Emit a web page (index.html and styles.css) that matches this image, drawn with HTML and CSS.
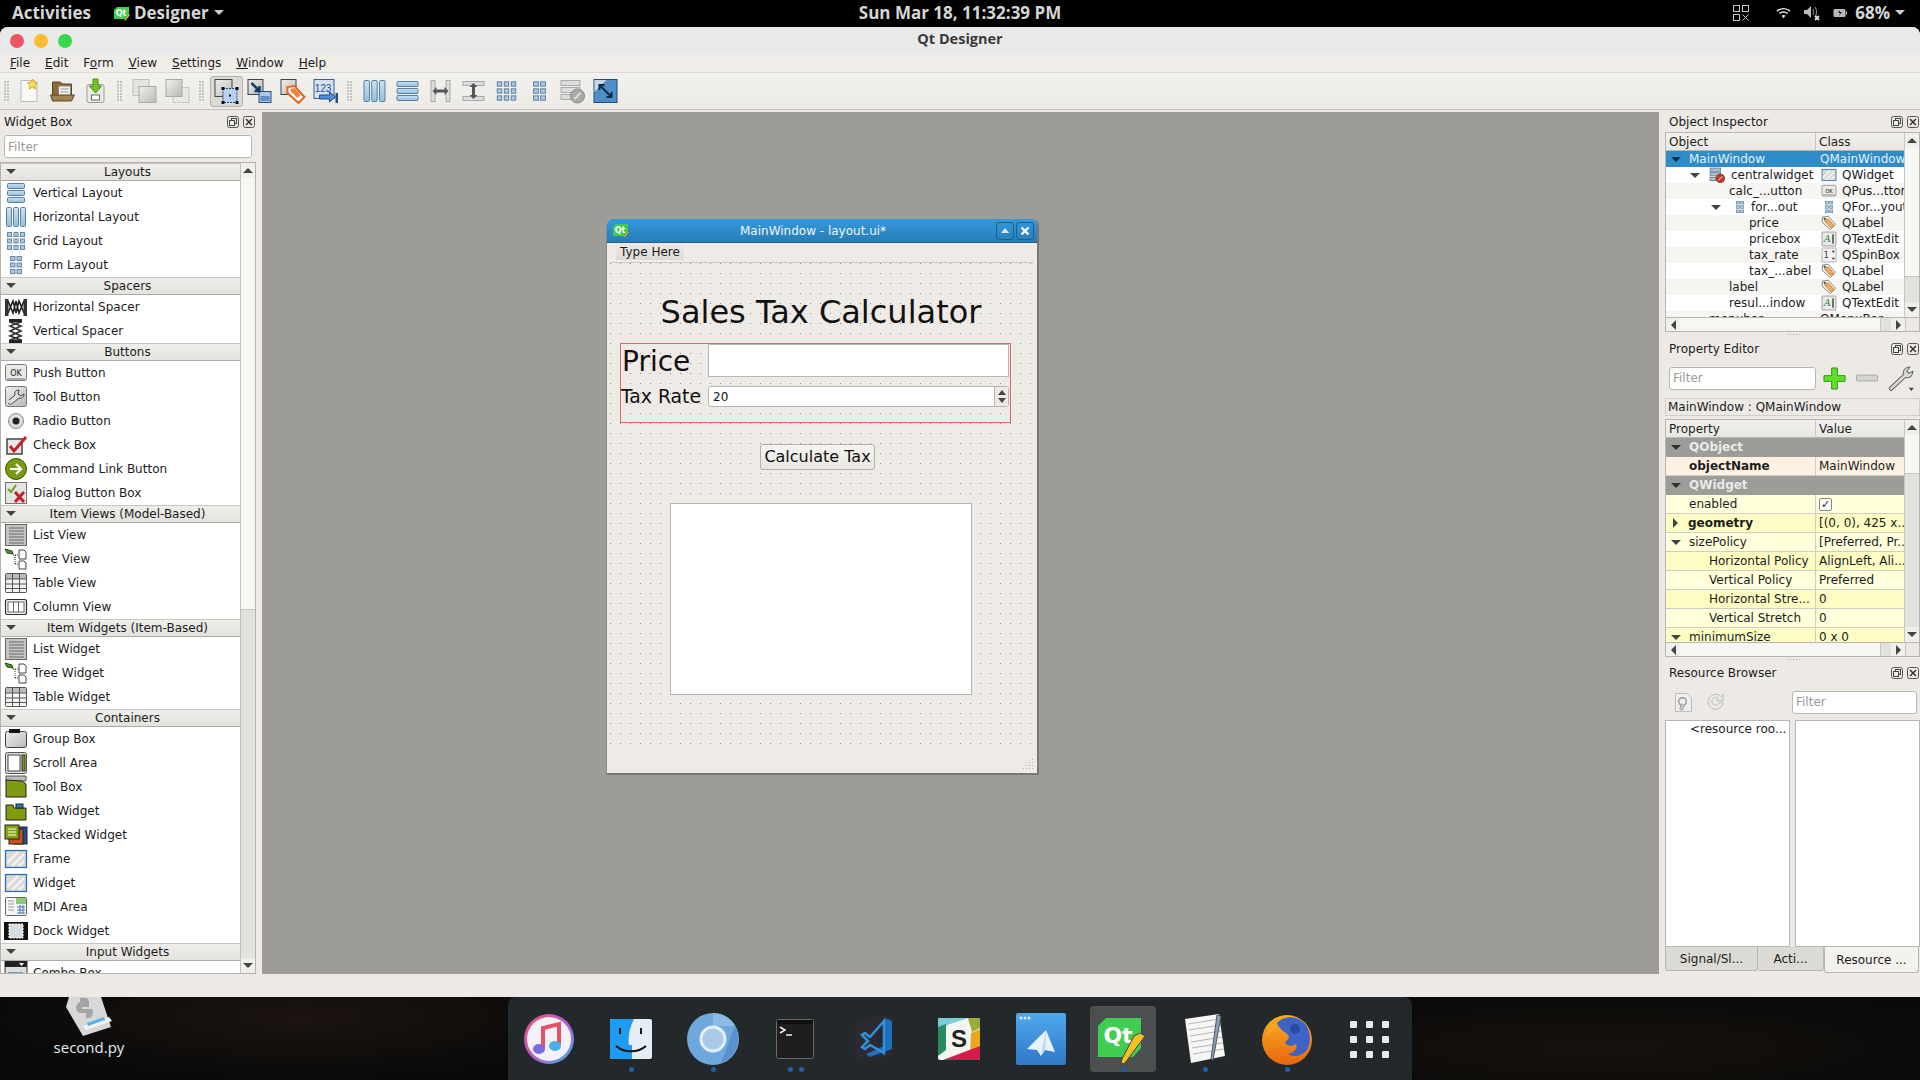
FILE: index.html
```html
<!DOCTYPE html>
<html lang="en">
<head>
  <meta charset="UTF-8">
  <title>Qt Designer</title>
  <link rel="stylesheet" href="styles.css">
</head>
<body>

  <svg class="defs" xmlns="http://www.w3.org/2000/svg">
    <defs>
      <linearGradient id="g-gray" x1="0" y1="0" x2="1" y2="1"><stop offset="0" stop-color="#efefed"/><stop offset="1" stop-color="#b9b9b6"/></linearGradient>
      <linearGradient id="g-bar" x1="0" y1="0" x2="0" y2="1"><stop offset="0" stop-color="#c9e2f4"/><stop offset="1" stop-color="#8fbfe3"/></linearGradient>
      <linearGradient id="g-blue" x1="0" y1="0" x2="0" y2="1"><stop offset="0" stop-color="#4fa9ee"/><stop offset="1" stop-color="#2f78c8"/></linearGradient>
      <linearGradient id="g-fox" x1="0" y1="0" x2="0" y2="1"><stop offset="0" stop-color="#f7b01e"/><stop offset="1" stop-color="#e8660f"/></linearGradient>
      <linearGradient id="g-ring" x1="0" y1="0" x2="1" y2="1"><stop offset="0" stop-color="#f0556e"/><stop offset="0.5" stop-color="#b45ad0"/><stop offset="1" stop-color="#3fb5ec"/></linearGradient>
    </defs>

    <symbol id="i-vlay" viewBox="0 0 24 24"><g fill="url(#g-bar)" stroke="#5f7e9c"><rect x="3.5" y="2.5" width="17" height="5" rx="1"/><rect x="3.5" y="9.5" width="17" height="5" rx="1"/><rect x="3.5" y="16.5" width="17" height="5" rx="1"/></g></symbol>
    <symbol id="i-hlay" viewBox="0 0 24 24"><g fill="url(#g-bar)" stroke="#5f7e9c"><rect x="2.5" y="2.5" width="5" height="19" rx="1"/><rect x="9.5" y="2.5" width="5" height="19" rx="1"/><rect x="16.5" y="2.5" width="5" height="19" rx="1"/></g></symbol>
    <symbol id="i-grid" viewBox="0 0 24 24"><g fill="#a9c9e6" stroke="#6b86a3"><rect x="3.5" y="3.5" width="4" height="4"/><rect x="10" y="3.5" width="4" height="4"/><rect x="16.5" y="3.5" width="4" height="4"/><rect x="3.5" y="10" width="4" height="4"/><rect x="10" y="10" width="4" height="4"/><rect x="16.5" y="10" width="4" height="4"/><rect x="3.5" y="16.5" width="4" height="4"/><rect x="10" y="16.5" width="4" height="4"/><rect x="16.5" y="16.5" width="4" height="4"/></g></symbol>
    <symbol id="i-form" viewBox="0 0 24 24"><g fill="#a9c9e6" stroke="#6b86a3"><rect x="6.5" y="3.5" width="4.5" height="4"/><rect x="13" y="3.5" width="4.5" height="4"/><rect x="6.5" y="10" width="4.5" height="4"/><rect x="13" y="10" width="4.5" height="4"/><rect x="6.5" y="16.5" width="4.5" height="4"/><rect x="13" y="16.5" width="4.5" height="4"/></g></symbol>
    <symbol id="i-hsp" viewBox="0 0 24 24"><rect x="1" y="4" width="3.500" height="17" fill="#333"/><rect x="19.500" y="4" width="3.500" height="17" fill="#333"/><path d="M4 6l5 12 3-12 3 12 5-12M4 18l5-12 3 12 3-12 5 12" fill="none" stroke="#222" stroke-width="1.600"/></symbol>
    <symbol id="i-vsp" viewBox="0 0 24 24"><rect x="5" y="0" width="13" height="3.500" fill="#222"/><rect x="5" y="20.500" width="13" height="3.500" fill="#222"/><path d="M6 3l11 4-11 5 11 5-11 4M17 3L6 7l11 5-11 5 11 4" fill="none" stroke="#333" stroke-width="1.600"/></symbol>
    <symbol id="i-ok" viewBox="0 0 24 24"><rect x="1.5" y="3.5" width="21" height="16" rx="2" fill="#e9e9e7" stroke="#777"/><rect x="3" y="17" width="18" height="2" fill="#aaa"/></symbol>
    <symbol id="i-toolb" viewBox="0 0 24 24"><rect x="1.5" y="1.5" width="21" height="20" rx="2" fill="url(#g-gray)" stroke="#777"/><path d="M4 18c2 2 4 1 5 0l6-5c3 1 5-1 5-4l-3 2-3-2 1-4c-3 0-5 2-4 5l-6 5" fill="#ddd" stroke="#444"/></symbol>
    <symbol id="i-radio" viewBox="0 0 24 24"><circle cx="12" cy="12" r="7.5" fill="#ddd" stroke="#888"/><circle cx="12" cy="12" r="3.5" fill="#222"/></symbol>
    <symbol id="i-check" viewBox="0 0 24 24"><rect x="3" y="6" width="15" height="15" fill="#e8e8e8" stroke="#444" stroke-width="1.5"/><path d="M6 13l4 5L22 4" fill="none" stroke="#c8202a" stroke-width="3"/></symbol>
    <symbol id="i-cmd" viewBox="0 0 24 24"><circle cx="12" cy="12" r="10.5" fill="#7a9a10" stroke="#3d5205"/><path d="M6 12h11M12 7l5 5-5 5" fill="none" stroke="#fff" stroke-width="2.2"/></symbol>
    <symbol id="i-dlg" viewBox="0 0 24 24"><rect x="1.5" y="1.5" width="21" height="21" fill="#e4e4e2" stroke="#777"/><path d="M4 8l3 3 5-7" fill="none" stroke="#6aa41a" stroke-width="2"/><path d="M11 11l9 10M20 11l-9 10" stroke="#c8202a" stroke-width="3"/></symbol>
    <symbol id="i-list" viewBox="0 0 24 24"><rect x="1.5" y="1.5" width="21" height="21" fill="#c4c4c2" stroke="#666"/><path d="M5 5h15M5 8h15M5 11h15M5 14h15M5 17h15M5 20h15" stroke="#888" stroke-width="1.3"/></symbol>
    <symbol id="i-tree" viewBox="0 0 24 24"><path d="M1 2l7 2 1 3-6-1z" fill="#4f9a2e" stroke="#1f4a12"/><path d="M9 8h5M11 8v10M11 17h3" stroke="#222" stroke-dasharray="1 1" fill="none"/><path d="M15 3h5l2 2v7h-7zM15 14h5l2 2v6h-7z" fill="#fff" stroke="#444"/></symbol>
    <symbol id="i-table" viewBox="0 0 24 24"><rect x="1.5" y="2.5" width="21" height="19" rx="1" fill="#f4f4f2" stroke="#555"/><rect x="2" y="3" width="20" height="5" fill="#bbb"/><path d="M2 8h20M2 13h20M2 17.500h20M8.500 3v18M15.500 3v18" stroke="#555"/></symbol>
    <symbol id="i-col" viewBox="0 0 24 24"><rect x="1.5" y="4.500" width="21" height="15" rx="2" fill="#eee" stroke="#333" stroke-width="1.2"/><rect x="4" y="7" width="16" height="10" fill="#fff" stroke="#666"/><path d="M9.500 7v10M14.500 7v10" stroke="#666"/></symbol>
    <symbol id="i-group" viewBox="0 0 24 24"><rect x="1.500" y="4.500" width="21" height="16" rx="2" fill="url(#g-gray)" stroke="#444"/><rect x="5" y="2" width="11" height="4" fill="#111"/></symbol>
    <symbol id="i-scroll" viewBox="0 0 24 24"><rect x="1.500" y="1.500" width="21" height="21" rx="2" fill="#ddd" stroke="#555"/><rect x="4" y="4" width="12" height="16" fill="#fff" stroke="#444"/><rect x="18" y="4" width="3" height="16" fill="#7a9a10" stroke="#333"/></symbol>
    <symbol id="i-toolbox" viewBox="0 0 24 24"><path d="M2 1h20v5H2z" fill="#bbb" stroke="#555"/><path d="M2 5l16 1 4 3v13H2z" fill="#7f9c10" stroke="#222"/></symbol>
    <symbol id="i-tab" viewBox="0 0 24 24"><path d="M2 6h7l1 3h12v12H2z" fill="#7f9c10" stroke="#222"/><rect x="12" y="5" width="7" height="4" fill="#2f78c8" stroke="#222"/></symbol>
    <symbol id="i-stack" viewBox="0 0 24 24"><rect x="10" y="4" width="13" height="17" fill="#1f4f9a" stroke="#222"/><rect x="5" y="6" width="14" height="15" fill="#c8501a" stroke="#222"/><rect x="1" y="2" width="14" height="14" fill="#84a312" stroke="#222"/><path d="M4 6h8M4 9h8M4 12h8" stroke="#fff"/></symbol>
    <symbol id="i-frame" viewBox="0 0 24 24"><rect x="1.500" y="3.500" width="21" height="17" fill="#d8d8d8" stroke="#2f6fb5" stroke-width="1.300"/><path d="M3 16L14 5M8 19L20 7M15 19l5-5" stroke="#f2f2f2" stroke-width="2.500"/></symbol>
    <symbol id="i-mdi" viewBox="0 0 24 24"><rect x="1.500" y="2.500" width="21" height="18" rx="1" fill="#f5f5f3" stroke="#666"/><rect x="12" y="3" width="10" height="6" fill="#8fc97a"/><path d="M4 6h6M4 9h6M4 12h6M4 15h6" stroke="#999"/><path d="M13 12h8M13 15h8M13 18h8M16 10v9M19 10v9" stroke="#4a78b5"/></symbol>
    <symbol id="i-dock" viewBox="0 0 24 24"><rect x="0" y="3" width="24" height="18" fill="#111"/><rect x="5" y="5" width="14" height="14" fill="#d8dde2" stroke="#fff" stroke-dasharray="2 1"/></symbol>
    <symbol id="i-combo" viewBox="0 0 24 24"><rect x="1" y="0" width="22" height="24" fill="#ddd" stroke="#333"/><rect x="1" y="0" width="22" height="6" fill="#222"/><path d="M15 2h5l-2.500 3z" fill="#fff"/><rect x="4" y="11" width="15" height="6" fill="#6f9bd0"/></symbol>
    <symbol id="i-tag" viewBox="0 0 24 24"><path d="M2 3l9-1 11 12-8 8L2 11z" fill="#f4f4ee" stroke="#555"/><path d="M6 7l5-1 8 9-4 4-9-9z" fill="#f2a860" stroke="#b0631a"/><circle cx="5.500" cy="5.500" r="1.500" fill="#333"/></symbol>
    <symbol id="i-ai" viewBox="0 0 24 24"><rect x="1.500" y="1.500" width="21" height="21" rx="1" fill="#e9e9e7" stroke="#777"/><rect x="17" y="5" width="2" height="14" fill="#333"/></symbol>
    <symbol id="i-spin" viewBox="0 0 24 24"><rect x="1.500" y="1.500" width="21" height="21" rx="1" fill="#f2f2f0" stroke="#999"/><path d="M16 8l2.500-3 2.500 3zM16 16l2.500 3 2.500-3z" fill="#333"/></symbol>
    <symbol id="i-central" viewBox="0 0 24 24"><g fill="#a9bcd0" stroke="#5a6f85"><rect x="1.500" y="1.500" width="16" height="5"/><rect x="1.500" y="8.500" width="16" height="5"/><rect x="1.500" y="15.500" width="11" height="5"/></g><circle cx="17" cy="17" r="6.500" fill="#c0392b" stroke="#7a1c12"/><path d="M14 20l6-6" stroke="#fff" stroke-width="1.500"/></symbol>

    <symbol id="t-new" viewBox="0 0 26 26"><path d="M4.500 2.500h14l2 3v18h-16z" fill="#f8f8f6" stroke="#bbb"/><path d="M16 1l1.500 3.500 3.500.4-2.700 2.400.8 3.700-3.100-2-3.100 2 .8-3.700L11 4.900l3.500-.4z" fill="#ffe34a" stroke="#d8a818"/></symbol>
    <symbol id="t-open" viewBox="0 0 26 26"><path d="M3 4h8l2 2h9v13H3z" fill="#8a6a3a" stroke="#5f4722"/><rect x="9" y="8" width="12" height="10" fill="#f2f2ee" stroke="#888"/><path d="M11 11h8M11 14h8" stroke="#999"/><path d="M1 17h24l-3 6H3z" fill="#a08350" stroke="#5f4722"/></symbol>
    <symbol id="t-save" viewBox="0 0 26 26"><rect x="4.500" y="6.500" width="17" height="18" rx="2" fill="#e9e9e6" stroke="#999"/><rect x="9" y="17" width="8" height="5" fill="#fff" stroke="#666"/><path d="M10.500 1h5v7h3.500l-6 7-6-7h3.500z" fill="#74c422" stroke="#4b8c12"/></symbol>
    <symbol id="t-copy" viewBox="0 0 26 26"><rect x="1.500" y="1.500" width="16" height="16" fill="#e4e4e2" stroke="#c0c0bc"/><rect x="7.500" y="8.500" width="17" height="16" fill="url(#g-gray)" stroke="#aaa"/></symbol>
    <symbol id="t-paste" viewBox="0 0 26 26"><rect x="8.500" y="9.500" width="16" height="15" fill="#e8e8e6" stroke="#c4c4c0"/><rect x="1.500" y="1.500" width="16" height="17" fill="url(#g-gray)" stroke="#aaa"/></symbol>
    <symbol id="t-edit" viewBox="0 0 26 26"><rect x="1.500" y="1.500" width="17" height="17" fill="url(#g-gray)" stroke="#444"/><rect x="9.500" y="10.500" width="14" height="14" fill="#b5d2f2" stroke="#2a4a7a" stroke-dasharray="2 1"/><g fill="#111"><rect x="8" y="9" width="3" height="3"/><rect x="22" y="9" width="3" height="3"/><rect x="8" y="23" width="3" height="3"/><rect x="22" y="23" width="3" height="3"/><rect x="15.500" y="16.500" width="2" height="2"/></g></symbol>
    <symbol id="t-sig" viewBox="0 0 26 26"><rect x="1.500" y="1.500" width="15" height="15" fill="url(#g-gray)" stroke="#444"/><rect x="12.500" y="13.500" width="12" height="11" fill="#a9c9ea" stroke="#2a4a7a"/><rect x="14" y="18" width="9" height="5" fill="#5f8fc8"/><path d="M5 5l8 8M13 8v5H8" fill="none" stroke="#123a5f" stroke-width="2.500"/></symbol>
    <symbol id="t-buddy" viewBox="0 0 26 26"><rect x="1.500" y="1.500" width="15" height="15" fill="url(#g-gray)" stroke="#444"/><path d="M8 9l7-1 10 11-6 6L8 15z" fill="#fff" stroke="#e8651a" stroke-width="2"/><path d="M11 11l4-1 6 7-3 3-7-7z" fill="#f2813a"/></symbol>
    <symbol id="t-tab" viewBox="0 0 26 26"><rect x="1.500" y="1.500" width="20" height="19" fill="#d6e2ef" stroke="#3a5f8a"/><path d="M7 17h10v-3l6 5-6 5v-3H7z" fill="#4f8fd8" stroke="#1f4f8a"/><rect x="23" y="15" width="2.500" height="10" fill="#1f4f8a"/></symbol>
    <symbol id="t-hlay" viewBox="0 0 26 26"><g fill="url(#g-bar)" stroke="#5f7e9c"><rect x="2.500" y="2.500" width="5.500" height="21" rx="1"/><rect x="10.200" y="2.500" width="5.500" height="21" rx="1"/><rect x="18" y="2.500" width="5.500" height="21" rx="1"/></g></symbol>
    <symbol id="t-vlay" viewBox="0 0 26 26"><g fill="url(#g-bar)" stroke="#5f7e9c"><rect x="2.500" y="3.500" width="21" height="5" rx="1"/><rect x="2.500" y="10.500" width="21" height="5" rx="1"/><rect x="2.500" y="17.500" width="21" height="5" rx="1"/></g></symbol>
    <symbol id="t-hsplit" viewBox="0 0 26 26"><g fill="#ddd" stroke="#aaa"><rect x="3.500" y="2.500" width="4" height="21"/><rect x="18.500" y="2.500" width="4" height="21"/></g><path d="M5 13l4-4v2.500h8V9l4 4-4 4v-2.500H9V17z" fill="#555"/></symbol>
    <symbol id="t-vsplit" viewBox="0 0 26 26"><g fill="#ddd" stroke="#aaa"><rect x="2.500" y="3.500" width="21" height="4"/><rect x="2.500" y="18.500" width="21" height="4"/></g><path d="M13 5l4 4h-2.500v8H17l-4 4-4-4h2.500V9H9z" fill="#555"/></symbol>
    <symbol id="t-break" viewBox="0 0 26 26"><g fill="#ddd" stroke="#aaa"><rect x="1.500" y="2.500" width="19" height="5"/><rect x="1.500" y="9.500" width="19" height="5"/><rect x="1.500" y="16.500" width="12" height="5"/></g><circle cx="18" cy="18" r="7" fill="#aaa" stroke="#888"/><path d="M15 21l6-6" stroke="#ddd" stroke-width="2"/></symbol>
    <symbol id="t-adjust" viewBox="0 0 26 26"><rect x="1.500" y="1.500" width="23" height="23" fill="#4f8fc4" stroke="#1f4f7a"/><path d="M2 2h12L2 14z" fill="#c8d8e4"/><path d="M7 7l12 12M7 12V7h5M19 14v5h-5" fill="none" stroke="#0a2a4a" stroke-width="2"/></symbol>

    <symbol id="t-x" viewBox="0 0 12 12"><rect x="0.500" y="0.500" width="11" height="11" rx="2" fill="none" stroke="#555"/><path d="M3 3l6 6M9 3L3 9" stroke="#333" stroke-width="1.500"/></symbol>
    <symbol id="t-float" viewBox="0 0 12 12"><rect x="0.500" y="0.500" width="11" height="11" rx="2" fill="none" stroke="#555"/><rect x="4.500" y="2.500" width="5" height="5" fill="none" stroke="#444"/><rect x="2.500" y="4.500" width="5" height="5" fill="#eee" stroke="#444"/></symbol>
    <symbol id="i-qt" viewBox="0 0 16 16"><path d="M3 1h12v9l-3 3H0V4z" fill="#41cd52"/><path d="M11 13l4-5 1 1-4 5-2 1z" fill="#f2c320" stroke="#555" stroke-width="0.400"/></symbol>
  </svg>

  <div class="topbar">
    <div class="top-left">
      <span class="top-text">Activities</span>
      <svg class="top-qt" viewBox="0 0 16 16"><use href="#i-qt"/><text x="7" y="10" font-size="8" font-family="DejaVu Sans" font-weight="700" text-anchor="middle" fill="#fff">Qt</text></svg>
      <span class="top-text">Designer</span>
      <span class="top-caret"></span>
    </div>
    <div class="top-clock">Sun Mar 18, 11:32:39 PM</div>
    <div class="top-right">
      <svg class="tray-grid" viewBox="0 0 16 16"><g fill="none" stroke="#c8c8c8"><rect x="0.500" y="0.500" width="6" height="6"/><rect x="9.500" y="0.500" width="6" height="6"/><rect x="0.500" y="9.500" width="6" height="6"/><path d="M9.500 9.500l6 6M15.500 9.500l-6 6"/></g></svg>
      <svg class="tray-wifi" viewBox="0 0 16 12"><g fill="none" stroke="#e6e6e6" stroke-width="1.500"><path d="M1 4c4-3.500 10-3.500 14 0"/><path d="M3.500 6.500c2.500-2 6.500-2 9 0"/></g><path d="M6 9c1-1 3-1 4 0l-2 2.500z" fill="#e6e6e6"/></svg>
      <svg class="tray-sound" viewBox="0 0 17 17"><path d="M1 6h3l4-4v12l-4-4H1z" fill="#bbb"/><path d="M10 5c1 2 1 4 0 6M12 3c2 3 2 7 0 10" fill="none" stroke="#777" stroke-width="1.300"/><path d="M12 12l4 4M16 12l-4 4" stroke="#ddd" stroke-width="1.800"/></svg>
      <svg class="tray-batt" viewBox="0 0 14 10"><rect x="0.500" y="1" width="12" height="8" rx="1.500" fill="#bbb"/><rect x="13" y="3.500" width="1" height="3" fill="#bbb"/><path d="M7 2l-2 3h2l-1 3 3-4H7z" fill="#222"/></svg>
      <span class="top-text">68%</span>
      <span class="top-caret"></span>
    </div>
  </div>

  <div class="app">
    <div class="titlebar">
      <div class="lights">
        <span class="light red"></span>
        <span class="light yellow"></span>
        <span class="light green"></span>
      </div>
      <div class="app-title">Qt Designer</div>
    </div>

    <div class="menubar">
      <span><u>F</u>ile</span>
      <span><u>E</u>dit</span>
      <span>F<u>o</u>rm</span>
      <span><u>V</u>iew</span>
      <span><u>S</u>ettings</span>
      <span><u>W</u>indow</span>
      <span><u>H</u>elp</span>
    </div>

    <div class="toolbar">
      <span class="grip"></span>
      <span class="tbtn"><svg><use href="#t-new"/></svg></span>
      <span class="tbtn"><svg><use href="#t-open"/></svg></span>
      <span class="tbtn"><svg><use href="#t-save"/></svg></span>
      <span class="grip"></span>
      <span class="tbtn"><svg><use href="#t-copy"/></svg></span>
      <span class="tbtn"><svg><use href="#t-paste"/></svg></span>
      <span class="grip"></span>
      <span class="tbtn checked"><svg><use href="#t-edit"/></svg></span>
      <span class="tbtn"><svg><use href="#t-sig"/></svg></span>
      <span class="tbtn"><svg><use href="#t-buddy"/></svg></span>
      <span class="tbtn"><svg viewBox="0 0 26 26"><use href="#t-tab"/><text x="10.500" y="14" font-size="10" font-family="Liberation Sans" text-anchor="middle" fill="#1f4f9a">123</text></svg></span>
      <span class="grip"></span>
      <span class="tbtn"><svg><use href="#t-hlay"/></svg></span>
      <span class="tbtn"><svg><use href="#t-vlay"/></svg></span>
      <span class="tbtn"><svg><use href="#t-hsplit"/></svg></span>
      <span class="tbtn"><svg><use href="#t-vsplit"/></svg></span>
      <span class="tbtn"><svg><use href="#i-grid"/></svg></span>
      <span class="tbtn"><svg><use href="#i-form"/></svg></span>
      <span class="tbtn"><svg><use href="#t-break"/></svg></span>
      <span class="tbtn"><svg><use href="#t-adjust"/></svg></span>
    </div>

    <div class="main">
      <div class="leftdock">
        <div class="dock-title">
          <span>Widget Box</span>
          <span class="dock-btns"><svg><use href="#t-float"/></svg><svg><use href="#t-x"/></svg></span>
        </div>
        <div class="filter wb-filter">Filter</div>
        <div class="wb-frame">
          <div class="wb-list">
            <div class="wb-head"><span class="arrow-d"></span>Layouts</div>
            <div class="wb-row"><svg><use href="#i-vlay"/></svg>Vertical Layout</div>
            <div class="wb-row"><svg><use href="#i-hlay"/></svg>Horizontal Layout</div>
            <div class="wb-row"><svg><use href="#i-grid"/></svg>Grid Layout</div>
            <div class="wb-row"><svg><use href="#i-form"/></svg>Form Layout</div>
            <div class="wb-head"><span class="arrow-d"></span>Spacers</div>
            <div class="wb-row"><svg><use href="#i-hsp"/></svg>Horizontal Spacer</div>
            <div class="wb-row"><svg><use href="#i-vsp"/></svg>Vertical Spacer</div>
            <div class="wb-head"><span class="arrow-d"></span>Buttons</div>
            <div class="wb-row"><svg viewBox="0 0 24 24"><use href="#i-ok"/><text x="12" y="14.500" font-size="8" font-family="DejaVu Sans" text-anchor="middle" fill="#222">OK</text></svg>Push Button</div>
            <div class="wb-row"><svg><use href="#i-toolb"/></svg>Tool Button</div>
            <div class="wb-row"><svg><use href="#i-radio"/></svg>Radio Button</div>
            <div class="wb-row"><svg><use href="#i-check"/></svg>Check Box</div>
            <div class="wb-row"><svg><use href="#i-cmd"/></svg>Command Link Button</div>
            <div class="wb-row"><svg><use href="#i-dlg"/></svg>Dialog Button Box</div>
            <div class="wb-head"><span class="arrow-d"></span>Item Views (Model-Based)</div>
            <div class="wb-row"><svg><use href="#i-list"/></svg>List View</div>
            <div class="wb-row"><svg><use href="#i-tree"/></svg>Tree View</div>
            <div class="wb-row"><svg><use href="#i-table"/></svg>Table View</div>
            <div class="wb-row"><svg><use href="#i-col"/></svg>Column View</div>
            <div class="wb-head"><span class="arrow-d"></span>Item Widgets (Item-Based)</div>
            <div class="wb-row"><svg><use href="#i-list"/></svg>List Widget</div>
            <div class="wb-row"><svg><use href="#i-tree"/></svg>Tree Widget</div>
            <div class="wb-row"><svg><use href="#i-table"/></svg>Table Widget</div>
            <div class="wb-head"><span class="arrow-d"></span>Containers</div>
            <div class="wb-row"><svg><use href="#i-group"/></svg>Group Box</div>
            <div class="wb-row"><svg><use href="#i-scroll"/></svg>Scroll Area</div>
            <div class="wb-row"><svg><use href="#i-toolbox"/></svg>Tool Box</div>
            <div class="wb-row"><svg><use href="#i-tab"/></svg>Tab Widget</div>
            <div class="wb-row"><svg><use href="#i-stack"/></svg>Stacked Widget</div>
            <div class="wb-row"><svg><use href="#i-frame"/></svg>Frame</div>
            <div class="wb-row"><svg><use href="#i-frame"/></svg>Widget</div>
            <div class="wb-row"><svg><use href="#i-mdi"/></svg>MDI Area</div>
            <div class="wb-row"><svg><use href="#i-dock"/></svg>Dock Widget</div>
            <div class="wb-head"><span class="arrow-d"></span>Input Widgets</div>
            <div class="wb-row"><svg><use href="#i-combo"/></svg>Combo Box</div>
          </div>
          <div class="vscroll wb-scroll">
            <span class="sb-btn"><span class="arrow-u"></span></span>
            <span class="sb-thumb"></span>
            <span class="sb-track"></span>
            <span class="sb-btn"><span class="arrow-d"></span></span>
          </div>
        </div>
      </div>

      <div class="mdi">
        <div class="subwindow">
          <div class="sub-title">
            <svg class="sub-icon" viewBox="0 0 16 16"><use href="#i-qt"/><text x="7" y="10" font-size="8" font-family="DejaVu Sans" font-weight="700" text-anchor="middle" fill="#fff">Qt</text></svg>
            <span class="sub-name">MainWindow - layout.ui*</span>
            <span class="sub-btn"><span class="arrow-up-white"></span></span>
            <span class="sub-btn">
              <svg viewBox="0 0 10 10"><path d="M1.500 1.500l7 7M8.500 1.500l-7 7" stroke="#fff" stroke-width="2.200"/></svg>
            </span>
          </div>
          <div class="sub-menu"><span class="type-here">Type Here</span></div>
          <div class="canvas">
            <div class="heading">Sales Tax Calculator</div>
            <div class="form">
              <div class="lbl-price">Price</div>
              <div class="price-box"></div>
              <div class="lbl-rate">Tax Rate</div>
              <div class="spin">
                <span class="spin-val">20</span>
                <span class="spin-btns"><span class="arrow-u"></span><span class="arrow-d"></span></span>
              </div>
            </div>
            <div class="calc-btn">Calculate Tax</div>
            <div class="result-box"></div>
          </div>
          <div class="sub-status">
            <svg class="size-grip" viewBox="0 0 11 11"><g fill="#b5b3ad"><rect x="9" y="0" width="1" height="1"/><rect x="6" y="3" width="1" height="1"/><rect x="9" y="3" width="1" height="1"/><rect x="3" y="6" width="1" height="1"/><rect x="6" y="6" width="1" height="1"/><rect x="9" y="6" width="1" height="1"/><rect x="0" y="9" width="1" height="1"/><rect x="3" y="9" width="1" height="1"/><rect x="6" y="9" width="1" height="1"/><rect x="9" y="9" width="1" height="1"/></g></svg>
          </div>
        </div>
      </div>

      <div class="rightdock">
        <div class="dock-title first">
          <span>Object Inspector</span>
          <span class="dock-btns"><svg><use href="#t-float"/></svg><svg><use href="#t-x"/></svg></span>
        </div>
        <div class="panel obj-panel">
          <div class="panel-top">
            <div class="panel-body">
              <div class="col-head"><span>Object</span><span>Class</span></div>
              <div class="obj-rows">
                <div class="obj-row selected">
                  <div class="c1 p-main"><span class="arrow-d dark"></span>MainWindow</div>
                  <div class="c2 plain">QMainWindow</div>
                </div>
                <div class="obj-row">
                  <div class="c1 p-central"><span class="arrow-d"></span><svg class="ic-central"><use href="#i-central"/></svg>centralwidget</div>
                  <div class="c2"><svg><use href="#i-frame"/></svg>QWidget</div>
                </div>
                <div class="obj-row alt">
                  <div class="c1 p-child">calc_...utton</div>
                  <div class="c2"><svg viewBox="0 0 24 24"><use href="#i-ok"/><text x="12" y="14.500" font-size="8" font-family="DejaVu Sans" text-anchor="middle" fill="#222">OK</text></svg>QPus...tton</div>
                </div>
                <div class="obj-row">
                  <div class="c1 p-form"><span class="arrow-d"></span><svg class="ic-form"><use href="#i-form"/></svg>for...out</div>
                  <div class="c2"><svg><use href="#i-form"/></svg>QFor...yout</div>
                </div>
                <div class="obj-row alt">
                  <div class="c1 p-leaf">price</div>
                  <div class="c2"><svg><use href="#i-tag"/></svg>QLabel</div>
                </div>
                <div class="obj-row">
                  <div class="c1 p-leaf">pricebox</div>
                  <div class="c2"><svg viewBox="0 0 24 24"><use href="#i-ai"/><text x="9.500" y="17" font-size="14" font-family="DejaVu Serif" font-style="italic" text-anchor="middle" fill="#2e7a3a">A</text></svg>QTextEdit</div>
                </div>
                <div class="obj-row alt">
                  <div class="c1 p-leaf">tax_rate</div>
                  <div class="c2"><svg viewBox="0 0 24 24"><use href="#i-spin"/><text x="8" y="17" font-size="12" font-family="DejaVu Sans" text-anchor="middle" fill="#333">1</text></svg>QSpinBox</div>
                </div>
                <div class="obj-row">
                  <div class="c1 p-leaf">tax_...abel</div>
                  <div class="c2"><svg><use href="#i-tag"/></svg>QLabel</div>
                </div>
                <div class="obj-row alt">
                  <div class="c1 p-child">label</div>
                  <div class="c2"><svg><use href="#i-tag"/></svg>QLabel</div>
                </div>
                <div class="obj-row">
                  <div class="c1 p-child">resul...indow</div>
                  <div class="c2"><svg viewBox="0 0 24 24"><use href="#i-ai"/><text x="9.500" y="17" font-size="14" font-family="DejaVu Serif" font-style="italic" text-anchor="middle" fill="#2e7a3a">A</text></svg>QTextEdit</div>
                </div>
                <div class="obj-row alt">
                  <div class="c1 p-menu">menubar</div>
                  <div class="c2 plain">QMenuBar</div>
                </div>
              </div>
            </div>
            <div class="vscroll">
              <span class="sb-btn"><span class="arrow-u"></span></span>
              <span class="sb-thumb obj-thumb"></span>
              <span class="sb-track"></span>
              <span class="sb-btn"><span class="arrow-d"></span></span>
            </div>
          </div>
          <div class="hscroll">
            <span class="sb-btn"><span class="arrow-l"></span></span>
            <span class="h-thumb"></span>
            <span class="h-track"></span>
            <span class="sb-btn"><span class="arrow-r"></span></span>
            <span class="sb-corner"></span>
          </div>
        </div>

        <div class="split-dots"></div>

        <div class="dock-title">
          <span>Property Editor</span>
          <span class="dock-btns"><svg><use href="#t-float"/></svg><svg><use href="#t-x"/></svg></span>
        </div>
        <div class="prop-tools">
          <div class="filter prop-filter">Filter</div>
          <svg class="plus" viewBox="0 0 24 24"><path d="M9 1h6v8h8v6h-8v8H9v-8H1V9h8z" fill="#5fe02a" stroke="#2a9a10"/></svg>
          <svg class="minus" viewBox="0 0 22 8"><rect x="0.500" y="1" width="21" height="6" rx="1" fill="#d4d4d0" stroke="#aaa"/></svg>
          <svg class="wrench" viewBox="0 0 26 26"><path d="M2 24c-1-1-1-2 0-3L15 9c-1-3 1-7 6-7l-3 4 2 2 4-2c0 4-3 7-7 6L4 24c-1 1-1 1-2 0z" fill="#d8d8d6" stroke="#666"/><path d="M20 22h5l-2.500 3z" fill="#444"/></svg>
        </div>
        <div class="obj-name">MainWindow : QMainWindow</div>
        <div class="panel prop-panel">
          <div class="panel-top">
            <div class="panel-body">
              <div class="col-head"><span>Property</span><span>Value</span></div>
              <div class="prop-rows">
                <div class="prop-row group"><div class="c1 p-main"><span class="arrow-d"></span>QObject</div><div class="c2"></div></div>
                <div class="prop-row peach"><div class="c1 pad-prop"><b>objectName</b></div><div class="c2">MainWindow</div></div>
                <div class="prop-row group"><div class="c1 p-main"><span class="arrow-d"></span>QWidget</div><div class="c2"></div></div>
                <div class="prop-row yel1"><div class="c1 pad-prop">enabled</div><div class="c2"><span class="checkbox">✓</span></div></div>
                <div class="prop-row yel2"><div class="c1 p-main"><span class="arrow-r"></span><b>geometry</b></div><div class="c2">[(0, 0), 425 x...</div></div>
                <div class="prop-row yel1"><div class="c1 p-main"><span class="arrow-d"></span>sizePolicy</div><div class="c2">[Preferred, Pr...</div></div>
                <div class="prop-row yel2"><div class="c1 pad-sub">Horizontal Policy</div><div class="c2">AlignLeft, Ali...</div></div>
                <div class="prop-row yel1"><div class="c1 pad-sub">Vertical Policy</div><div class="c2">Preferred</div></div>
                <div class="prop-row yel2"><div class="c1 pad-sub">Horizontal Stre...</div><div class="c2">0</div></div>
                <div class="prop-row yel1"><div class="c1 pad-sub">Vertical Stretch</div><div class="c2">0</div></div>
                <div class="prop-row yel2"><div class="c1 p-main"><span class="arrow-d"></span>minimumSize</div><div class="c2">0 x 0</div></div>
              </div>
            </div>
            <div class="vscroll">
              <span class="sb-btn"><span class="arrow-u"></span></span>
              <span class="sb-thumb prop-thumb"></span>
              <span class="sb-track"></span>
              <span class="sb-btn"><span class="arrow-d"></span></span>
            </div>
          </div>
          <div class="hscroll">
            <span class="sb-btn"><span class="arrow-l"></span></span>
            <span class="h-thumb"></span>
            <span class="h-track"></span>
            <span class="sb-btn"><span class="arrow-r"></span></span>
            <span class="sb-corner"></span>
          </div>
        </div>

        <div class="split-dots tight"></div>

        <div class="dock-title">
          <span>Resource Browser</span>
          <span class="dock-btns"><svg><use href="#t-float"/></svg><svg><use href="#t-x"/></svg></span>
        </div>
        <div class="res-tools">
          <svg class="res-ic" viewBox="0 0 20 22"><path d="M1.500 1.500h12l5 5v14h-17z" fill="#eee" stroke="#bbb"/><circle cx="9" cy="10" r="4" fill="none" stroke="#999" stroke-width="1.500"/><path d="M8 12l-2 6 3 1 2-6" fill="#ccc" stroke="#999"/></svg>
          <svg class="res-ic" viewBox="0 0 20 22"><path d="M16 5a8 8 0 1 0 2 6h-4a4 4 0 1 1-1-4l-2 2h7V2z" fill="#e8e8e6" stroke="#bbb"/></svg>
          <div class="filter res-filter">Filter</div>
        </div>
        <div class="res-lists">
          <div class="res-tree">&lt;resource roo...</div>
          <div class="res-view"></div>
        </div>
        <div class="tabs">
          <span class="tab t-sig">Signal/Sl...</span>
          <span class="tab t-act">Acti...</span>
          <span class="tab t-res">Resource ...</span>
        </div>
      </div>
    </div>

    <div class="statusbar"></div>
  </div>

  <div class="desktop">
    <div class="desk-file">
      <svg class="file-ic" viewBox="0 0 48 40"><path d="M4 0h32l10 30-28 9L1 10z" fill="#d8d8d8"/><path d="M15 1c5-1 9 0 9 4v5h-7v2h10c2 4 0 9-3 9h-3v-5h-7c-4-3-4-9 1-11z" fill="#a4a4a4"/><path d="M18 29l26-9 3 4-26 9z" fill="#f2f2f2"/><path d="M22 26l17-6 1 3-17 6z" fill="#52b4ee"/></svg>
      <span>second.py</span>
    </div>
    <div class="launcher">
      <div class="dock-item">
        <svg viewBox="0 0 52 52"><circle cx="26" cy="26" r="25" fill="url(#g-ring)"/><circle cx="26" cy="26" r="22" fill="#f4f2f6"/><path d="M20 36V15l16-4v21" fill="none" stroke="#e8506a" stroke-width="4"/><ellipse cx="16" cy="36" rx="6" ry="5" fill="#7a6ae0"/><ellipse cx="32" cy="33" rx="6" ry="5" fill="#4ab0ea"/></svg>
      </div>
      <div class="dock-item">
        <svg viewBox="0 0 52 52"><rect x="5" y="6" width="42" height="40" rx="2" fill="#e4edf6"/><path d="M5 8a2 2 0 0 1 2-2h22c-5 10-6 18-5 26h3v14H7a2 2 0 0 1-2-2z" fill="#1f9cf0"/><path d="M15 15v6M36 15v6" stroke="#111" stroke-width="2"/><path d="M11 33c8 7 22 7 30 0" fill="none" stroke="#111" stroke-width="2"/></svg>
        <span class="dot"></span>
      </div>
      <div class="dock-item">
        <svg viewBox="0 0 52 52"><circle cx="26" cy="26" r="26" fill="#6fa8dc"/><path d="M26 0a26 26 0 0 1 22 13H26z" fill="#8cbce4"/><path d="M34 50l14-37a26 26 0 0 1-14 37z" fill="#5b90cf"/><circle cx="26" cy="26" r="12" fill="#a9c9e8" stroke="#e4eef6" stroke-width="3"/></svg>
        <span class="dot"></span>
      </div>
      <div class="dock-item">
        <svg viewBox="0 0 52 52"><rect x="7.500" y="6.500" width="37" height="39" rx="2" fill="#1e1e1e" stroke="#6a6a6a"/><rect x="8" y="7" width="36" height="4" fill="#111"/><path d="M11 14l5 3-5 3" fill="none" stroke="#eee" stroke-width="1.500"/><path d="M17 22h6" stroke="#eee" stroke-width="1.500"/></svg>
        <span class="dot"></span><span class="dot second"></span>
      </div>
      <div class="dock-item">
        <svg viewBox="0 0 52 52"><path d="M4 8l30-6 8 4v36l-30 8-8-4z" fill="#2a2a30"/><path d="M33 5l8 3v28l-22 8-4-3 18-8z" fill="#1e6fb8"/><path d="M33 8L19 24l-5-4-3 2 6 6-6 6 3 2 5-4 14 8z" fill="none" stroke="#2f92dc" stroke-width="2.500"/></svg>
      </div>
      <div class="dock-item">
        <svg viewBox="0 0 52 52"><rect x="5" y="5" width="42" height="42" rx="2" fill="#f4f4f0"/><path d="M5 7a2 2 0 0 1 2-2h28L14 12 5 34z" fill="#7ecbd8"/><path d="M35 5h10a2 2 0 0 1 2 2v8l-8 4z" fill="#9aad3a"/><path d="M38 20l9-4v22l-10 4z" fill="#e8a81e"/><path d="M5 14l8-3v26l-8 6z" fill="#2a8a62"/><path d="M10 47l37-14v12a2 2 0 0 1-2 2z" fill="#d41c4a"/><text x="26" y="34" font-size="24" font-family="Liberation Sans" font-weight="700" text-anchor="middle" fill="#222">S</text></svg>
      </div>
      <div class="dock-item">
        <svg viewBox="0 0 52 52"><rect x="1" y="0" width="50" height="52" rx="2" fill="url(#g-blue)"/><g fill="#dceaf6"><circle cx="6" cy="5" r="1.500"/><circle cx="10" cy="5" r="1.500"/><circle cx="14" cy="5" r="1.500"/></g><path d="M31 17L12 36l10 1 4 6 4-6 10 2z" fill="#e8f2fa"/><path d="M31 17l-5 26 4-6z" fill="#b9d8f0"/></svg>
      </div>
      <div class="dock-item active">
        <svg viewBox="0 0 52 52"><path d="M9 0h35v30l-8 9H1V8z" fill="#41cd52" transform="translate(0 5)"/><text x="21" y="30" font-size="22" font-family="DejaVu Sans" font-weight="700" text-anchor="middle" fill="#fff">Qt</text><path d="M37 23l6-3 5 3-20 27-4 1 1-5z" fill="#f2c320" stroke="#444"/></svg>
        <span class="dot"></span>
      </div>
      <div class="dock-item">
        <svg viewBox="0 0 52 52"><path d="M6 6l34-5 6 42-34 7z" fill="#f6f6f4"/><path d="M9 11l31-5M10 17l31-5M11 23l31-5M12 29l31-5M13 35l31-5M14 41l31-5" stroke="#b4b4b4"/><path d="M38 2l4 1-8 44-2-1z" fill="#8aa0b4" stroke="#556"/></svg>
        <span class="dot"></span>
      </div>
      <div class="dock-item">
        <svg viewBox="0 0 52 52"><circle cx="26" cy="27" r="25" fill="url(#g-fox)"/><path d="M14 5c-6 6-8 12-7 18 3-5 6-7 9-8z" fill="#f5a524"/><path d="M16 10c6-7 20-9 29 2 5 8 5 18 1 25-5 6-14 8-19 4 6-1 10-5 8-10-4 3-10 2-11-2 3-2 5-4 3-7-2-3-8-4-11-12z" fill="#3d63c8"/><circle cx="34" cy="16" r="5" fill="#2a4a9e"/></svg>
        <span class="dot"></span>
      </div>
      <div class="dock-item">
        <div class="apps-grid"><i></i><i></i><i></i><i></i><i></i><i></i><i></i><i></i><i></i></div>
      </div>
    </div>
  </div>

</body>
</html>
```

FILE: styles.css
```css
* {
  box-sizing: border-box;
}

body {
  margin: 0;
  width: 1920px;
  height: 1080px;
  overflow: hidden;
  background: #000;
  font-family: "DejaVu Sans", sans-serif;
  font-size: 12px;
  color: #1c1c1c;
}

.defs {
  position: absolute;
  width: 0;
  height: 0;
}

/* gnome top bar */
.topbar {
  height: 27px;
  padding-bottom: 2px;
  background: #000;
  display: flex;
  align-items: center;
  position: relative;
  color: #d6d6d6;
}

.top-text {
  font-family: "Open Sans", sans-serif;
  font-weight: 700;
  font-size: 17px;
  line-height: 24px;
}

.top-left {
  display: flex;
  align-items: center;
  padding-left: 12px;
}

.top-qt {
  width: 16px;
  height: 16px;
  margin: 2px 4px 0 23px;
}

.top-caret {
  display: inline-block;
  margin-left: 5px;
  border-left: 5px solid transparent;
  border-right: 5px solid transparent;
  border-top: 5px solid #ccc;
}

.top-clock {
  position: absolute;
  left: 0;
  right: 0;
  text-align: center;
  font-family: "Open Sans", sans-serif;
  font-weight: 700;
  font-size: 17px;
  line-height: 24px;
}

.top-right {
  margin-left: auto;
  display: flex;
  align-items: center;
  padding-right: 15px;
  position: relative;
}

.tray-grid {
  width: 16px;
  height: 16px;
  margin-right: 27px;
}

.tray-wifi {
  width: 15px;
  height: 12px;
  margin-right: 12px;
}

.tray-sound {
  width: 17px;
  height: 17px;
  margin-right: 13px;
}

.tray-batt {
  width: 14px;
  height: 10px;
  margin-right: 8px;
}

/* application window */
.app {
  height: 970px;
  background: #edeae5;
  border-radius: 8px 8px 0 0;
  overflow: hidden;
}

.titlebar {
  height: 27px;
  background: #e9e9e9;
  display: flex;
  align-items: center;
  position: relative;
}

.lights {
  display: flex;
  gap: 10px;
  padding-left: 10px;
}

.light {
  width: 14px;
  height: 14px;
  border-radius: 50%;
}

.red { background: #ee5560; }
.yellow { background: #fdbd2e; }
.green { background: #38d84a; }

.app-title {
  position: absolute;
  left: 0;
  right: 0;
  top: 2px;
  text-align: center;
  font-family: "Open Sans", sans-serif;
  font-weight: 700;
  font-size: 14.500px;
  color: #3a3a3a;
}

.menubar {
  height: 18px;
  display: flex;
  align-items: center;
  gap: 15px;
  padding-left: 10px;
  background: #f0ede8;
}

.toolbar {
  height: 38px;
  display: flex;
  align-items: center;
  background: linear-gradient(#f3f1ed, #ecebe6);
  border-top: 1px solid #dcdad5;
  border-bottom: 1px solid #c4c2bc;
}

.grip {
  width: 13px;
  height: 20px;
  margin: 0 2px 0 1px;
  display: flex;
  justify-content: center;
}

.grip::before {
  content: "";
  width: 5px;
  background: radial-gradient(circle at 1px 1px, #c4c2bc 0.8px, transparent 1px) 0 0 / 3px 3px;
}

.toolbar .grip:first-child {
  margin: 0;
}

.tbtn {
  width: 33px;
  height: 31px;
  display: flex;
  align-items: center;
  justify-content: center;
}

.tbtn svg {
  width: 27px;
  height: 26px;
}

.tbtn.checked {
  background: #dcdad4;
  border: 1px solid #b5b3ad;
  border-radius: 3px;
}

.main {
  height: 864px;
  display: flex;
}

/* left: widget box */
.leftdock {
  width: 262px;
  padding-right: 6px;
  display: flex;
  flex-direction: column;
}

.dock-title {
  height: 24px;
  flex: none;
  display: flex;
  align-items: center;
  justify-content: space-between;
  padding: 0 1px 0 4px;
}

.dock-btns {
  display: flex;
  gap: 4px;
}

.dock-btns svg {
  width: 12px;
  height: 12px;
}

.filter {
  height: 23px;
  background: #fff;
  border: 1px solid #b8b6b0;
  border-radius: 3px;
  color: #9a9a9a;
  padding-left: 3px;
  display: flex;
  align-items: center;
}

.wb-filter {
  width: 248px;
  margin: 1px 0 0 4px;
  flex: none;
}

.wb-frame {
  margin-top: 4px;
  height: 812px;
  display: flex;
  border: 1px solid #b5b3ad;
  overflow: hidden;
}

.wb-list {
  width: 240px;
  background: #fff;
  flex: none;
  overflow: hidden;
  border-right: 1px solid #c4c2bc;
}

.wb-head {
  height: 18px;
  background: linear-gradient(#f0eeea, #e4e2dd);
  border-bottom: 1px solid #aeaca6;
  border-top: 1px solid #c9c7c1;
  display: flex;
  align-items: center;
  justify-content: center;
  position: relative;
  padding-left: 14px;
}

.wb-head .arrow-d {
  position: absolute;
  left: 5px;
  top: 5px;
}

.wb-row {
  height: 24px;
  display: flex;
  align-items: center;
  padding-left: 3px;
}

.wb-row svg {
  width: 24px;
  height: 24px;
  margin-right: 5px;
  flex: none;
}

.vscroll {
  width: 14px;
  flex: none;
  display: flex;
  flex-direction: column;
  background: #f0eeea;
}

.wb-scroll {
  height: 100%;
}

.sb-btn {
  width: 14px;
  height: 15px;
  flex: none;
  display: flex;
  align-items: center;
  justify-content: center;
  background: #f1efeb;
}

.sb-thumb {
  height: 432px;
  background: #f7f6f3;
  border-bottom: 1px solid #c8c6c0;
  flex: none;
}

.sb-track {
  flex: 1;
  background: #e3e1dc;
}

.obj-thumb {
  height: 129px;
}

.prop-thumb {
  height: 39px;
}

.arrow-d, .arrow-u, .arrow-l, .arrow-r {
  display: inline-block;
  width: 0;
  height: 0;
  flex: none;
}

.arrow-d {
  border-left: 5px solid transparent;
  border-right: 5px solid transparent;
  border-top: 5px solid #444;
}

.arrow-u {
  border-left: 5px solid transparent;
  border-right: 5px solid transparent;
  border-bottom: 5px solid #444;
}

.arrow-l {
  border-top: 5px solid transparent;
  border-bottom: 5px solid transparent;
  border-right: 5px solid #444;
}

.arrow-r {
  border-top: 5px solid transparent;
  border-bottom: 5px solid transparent;
  border-left: 5px solid #444;
}

/* centre: mdi area and the form being edited */
.mdi {
  flex: 1;
  height: 862px;
  margin-top: 2px;
  background: #9d9c97;
  position: relative;
}

.subwindow {
  position: absolute;
  left: 344px;
  top: 107px;
  width: 433px;
  height: 556px;
  background: #eeebe6;
  border-radius: 6px 6px 0 0;
  border-right: 2px solid #777773;
  border-bottom: 2px solid #777773;
  border-left: 1px solid #8a8a86;
  overflow: hidden;
  display: flex;
  flex-direction: column;
}

.sub-title {
  height: 24px;
  flex: none;
  background: linear-gradient(#319ade, #2a7cb5);
  border-bottom: 1px solid #1f628f;
  display: flex;
  align-items: center;
  position: relative;
  padding: 0 3px 0 6px;
  color: #f0f4f8;
}

.sub-icon {
  width: 16px;
  height: 16px;
}

.sub-name {
  position: absolute;
  left: 133px;
}

.sub-btn {
  width: 18px;
  height: 18px;
  border: 1px solid #1d5f8c;
  border-radius: 3px;
  margin-left: 2px;
  display: flex;
  align-items: center;
  justify-content: center;
}

.sub-icon + .sub-name + .sub-btn {
  margin-left: auto;
}

.sub-btn svg {
  width: 10px;
  height: 10px;
}

.arrow-up-white {
  width: 0;
  height: 0;
  border-left: 4px solid transparent;
  border-right: 4px solid transparent;
  border-bottom: 5px solid #d8e8f4;
}

.sub-menu {
  height: 20px;
  flex: none;
  margin: 0 3px;
  border-bottom: 1px solid #cfcdc8;
  padding-left: 6px;
}

.type-here {
  display: block;
  height: 17px;
  line-height: 19px;
  padding: 0 4px;
  background: linear-gradient(#edeae5, #dedcd7);
  width: 68px;
}

.canvas {
  height: 487px;
  flex: none;
  padding-left: 13px;
  background: radial-gradient(circle at 3.5px 0.5px, #8c8c8c 0.7px, transparent 0.9px) 0 0 / 10px 10px;
}

.heading {
  height: 80px;
  width: 391px;
  padding: 27px 0 0 11px;
  font-size: 32px;
  line-height: 44px;
  text-align: center;
  color: #111;
}

.form {
  width: 391px;
  height: 80px;
  border: 1px solid #e4636c;
  display: grid;
  grid-template-columns: 87px 301px;
  grid-template-rows: 33px 21px;
  row-gap: 9px;
  align-items: center;
  color: #111;
}

.lbl-price {
  font-size: 28px;
  line-height: 35px;
  padding: 2px 0 0 1px;
}

.lbl-rate {
  font-size: 18.800px;
}

.price-box {
  height: 33px;
  background: #fff;
  border: 1px solid #b8b6b0;
}

.spin {
  height: 21px;
  background: #fff;
  border: 1px solid #b8b6b0;
  border-radius: 3px;
  display: flex;
  align-items: center;
  justify-content: space-between;
  padding-left: 4px;
}

.spin-btns {
  width: 14px;
  height: 19px;
  background: #edeae5;
  border-left: 1px solid #b8b6b0;
  display: flex;
  flex-direction: column;
  align-items: center;
  justify-content: center;
  gap: 3px;
}

.spin-btns .arrow-u, .spin-btns .arrow-d {
  border-left-width: 4px;
  border-right-width: 4px;
}

.calc-btn {
  width: 115px;
  height: 26px;
  margin: 21px 0 0 140px;
  border: 1px solid #b4b2ac;
  border-radius: 3px;
  background: linear-gradient(#f6f5f2, #e8e6e1);
  font-size: 16px;
  line-height: 24px;
  text-align: center;
  color: #111;
}

.result-box {
  width: 302px;
  height: 192px;
  margin: 33px 0 0 50px;
  background: #fff;
  border: 1px solid #b8b6b0;
}

.sub-status {
  flex: 1;
  display: flex;
  justify-content: flex-end;
  align-items: flex-end;
  padding: 0 3px 3px 0;
}

.size-grip {
  width: 11px;
  height: 11px;
}

/* right: inspector, property editor, resources */
.rightdock {
  width: 261px;
  flex: none;
  padding-left: 6px;
  display: flex;
  flex-direction: column;
}

.rightdock .dock-title {
  height: 22px;
}

.rightdock .dock-title.first {
  padding-top: 2px;
}

.panel {
  flex: none;
  border: 1px solid #b8b6b0;
  display: flex;
  flex-direction: column;
  overflow: hidden;
}

.obj-panel {
  height: 200px;
}

.prop-panel {
  height: 238px;
}

.panel-top {
  flex: 1;
  min-height: 0;
  display: flex;
}

.panel-body {
  width: 239px;
  flex: none;
  background: #fff;
  overflow: hidden;
  border-right: 1px solid #c8c6c0;
}

.col-head {
  height: 18px;
  display: grid;
  grid-template-columns: 150px 89px;
  background: linear-gradient(#f2f0ec, #e9e7e2);
  border-bottom: 1px solid #b8b6b0;
  line-height: 18px;
}

.col-head span {
  padding-left: 3px;
  border-right: 1px solid #c8c6c0;
}

.col-head span + span {
  border-right: 0;
}

.obj-row {
  height: 16px;
  display: grid;
  grid-template-columns: 150px 89px;
  white-space: nowrap;
  overflow: hidden;
}

.obj-row.alt {
  background: #f6f5f2;
}

.obj-row.selected {
  background: #308cc6;
  color: #e4f0f8;
}

.c1, .c2 {
  display: flex;
  align-items: center;
  overflow: hidden;
  white-space: nowrap;
}

.c2 {
  padding-left: 5px;
}

.c2 svg {
  width: 16px;
  height: 16px;
  margin-right: 5px;
  flex: none;
}

.c2.plain {
  padding-left: 4px;
}

.dark {
  border-top-color: #12324a;
}

.p-main { padding-left: 5px; }
.p-main .arrow-d, .p-main .arrow-r { margin-right: 8px; }
.p-main .arrow-r { margin: 0 10px 0 2px; }
.p-central { padding-left: 24px; }
.p-central .arrow-d { margin-right: 9px; }
.ic-central { width: 16px; height: 16px; margin-right: 6px; flex: none; }
.p-child { padding-left: 63px; }
.p-form { padding-left: 45px; }
.p-form .arrow-d { margin-right: 11px; }
.ic-form { width: 16px; height: 16px; margin-right: 3px; flex: none; }
.p-leaf { padding-left: 83px; }
.p-menu { padding-left: 43px; }

.hscroll {
  height: 14px;
  flex: none;
  display: flex;
  background: #f0eeea;
  border-top: 1px solid #b8b6b0;
}

.hscroll .sb-btn {
  height: 13px;
}

.h-thumb {
  flex: 1;
  background: #f7f6f3;
  border-right: 1px solid #c8c6c0;
}

.h-track {
  width: 10px;
  background: #e3e1dc;
}

.sb-corner {
  width: 14px;
  background: #edeae5;
  border-left: 1px solid #c8c6c0;
}

.split-dots {
  height: 6px;
  flex: none;
  background: repeating-linear-gradient(90deg, #aaa 0 1px, transparent 1px 3px) 122px 2px / 15px 1px no-repeat;
}

.split-dots.tight {
  height: 5px;
}

.prop-tools {
  height: 36px;
  flex: none;
  display: flex;
  align-items: center;
  padding: 0 0 0 4px;
}

.prop-filter {
  width: 147px;
  margin-right: 7px;
}

.plus {
  width: 23px;
  height: 23px;
  margin-right: 10px;
}

.minus {
  width: 22px;
  height: 8px;
  margin-right: 10px;
}

.wrench {
  width: 27px;
  height: 27px;
}

.obj-name {
  height: 18px;
  flex: none;
  border: 1px solid #d0cec8;
  line-height: 16px;
  padding-left: 2px;
  margin: 2px 0 3px;
  white-space: nowrap;
}

.prop-row {
  height: 19px;
  display: grid;
  grid-template-columns: 150px 89px;
  border-bottom: 1px solid #cfcdc4;
  white-space: nowrap;
  overflow: hidden;
}

.prop-row .c1 {
  border-right: 1px solid #cfcdc4;
}

.prop-row .c2 {
  padding-left: 3px;
}

.group {
  background: #9c9c98;
  color: #eaeaea;
  font-weight: 700;
  border-bottom-color: #9c9c98;
}

.group .c1 {
  border-right: 0;
}

.group .arrow-d {
  border-top-color: #333;
}

.peach { background: #fef1e2; }
.yel1 { background: #ffffdc; }
.yel2 { background: #fdfcc2; }

.pad-prop { padding-left: 23px; }
.pad-sub { padding-left: 43px; }

.checkbox {
  width: 13px;
  height: 13px;
  background: #fff;
  border: 1px solid #888;
  border-radius: 2px;
  font-size: 11px;
  line-height: 11px;
  font-weight: 700;
  text-align: center;
}

.res-tools {
  height: 36px;
  flex: none;
  display: flex;
  align-items: center;
  padding-left: 9px;
  gap: 13px;
}

.res-ic {
  width: 19px;
  height: 21px;
}

.res-filter {
  width: 125px;
  margin-left: 54px;
}

.res-lists {
  height: 227px;
  flex: none;
  display: flex;
  gap: 5px;
}

.res-tree {
  width: 125px;
  background: #fff;
  border: 1px solid #b8b6b0;
  padding: 1px 0 0 24px;
  white-space: nowrap;
}

.res-view {
  flex: 1;
  background: #fff;
  border: 1px solid #b8b6b0;
}

.tabs {
  height: 27px;
  display: flex;
  align-items: flex-start;
}

.tab {
  display: block;
  height: 24px;
  background: #dcdad5;
  border: 1px solid #b8b6b0;
  border-top: 0;
  text-align: center;
  line-height: 24px;
  border-radius: 0 0 3px 3px;
}

.t-sig { width: 93px; }
.t-act { width: 66px; border-left: 0; }
.t-res {
  width: 95px;
  height: 26px;
  background: #f3f1ed;
  line-height: 26px;
}

.statusbar {
  height: 23px;
  background: #edeae5;
}

/* desktop and launcher */
.desktop {
  height: 83px;
  background:
    radial-gradient(ellipse 300px 60px at 300px 20px, #1c1410, transparent),
    radial-gradient(ellipse 400px 60px at 1600px 50px, #16110d, transparent),
    #0a0a09;
  display: flex;
  justify-content: center;
  position: relative;
}

.desk-file {
  position: absolute;
  left: 47px;
  top: 0;
  width: 84px;
  display: flex;
  flex-direction: column;
  align-items: center;
  color: #e4edf4;
  font-family: "Open Sans", sans-serif;
  font-size: 15px;
}

.file-ic {
  width: 48px;
  height: 40px;
}

.launcher {
  width: 904px;
  height: 83px;
  background: #23282a;
  border-radius: 8px 8px 0 0;
  display: flex;
  padding-top: 9px;
}

.dock-item {
  width: 82px;
  height: 66px;
  flex: none;
  display: flex;
  align-items: center;
  justify-content: center;
  position: relative;
  border-radius: 4px;
}

.dock-item svg {
  width: 52px;
  height: 52px;
}

.dock-item.active {
  background: #4b4f50;
  width: 66px;
  margin: 0 8px;
}

.dot {
  position: absolute;
  left: 39px;
  bottom: 0;
  width: 5px;
  height: 5px;
  border-radius: 50%;
  background: #1f5fa8;
}

.dot.second {
  left: 45px;
}

.dock-item .dot:not(.second):nth-last-child(2) {
  left: 34px;
}

.active .dot {
  left: 31px;
}

.apps-grid {
  display: grid;
  grid-template-columns: repeat(3, 7px);
  gap: 8px 9px;
}

.apps-grid i {
  display: block;
  height: 7px;
  border-radius: 1px;
  background: #e8e8e8;
}
```
